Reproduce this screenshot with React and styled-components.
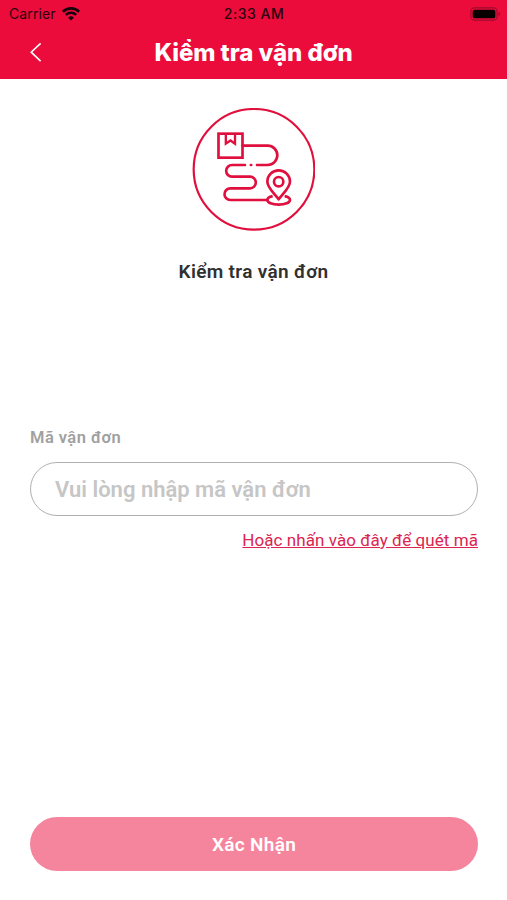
import React, { useState } from "react";
import styled, { createGlobalStyle } from "styled-components";

const App = () => {
  const [code, setCode] = useState("");

  return (
    <>
      <GlobalStyle />
      <Screen>
        <TopArea>
          <StatusBar>
            <Carrier>
              Carrier
              <WifiIcon />
            </Carrier>
            <Clock>2:33 AM</Clock>
            <BatteryIcon />
          </StatusBar>
          <Header>
            <BackButton aria-label="Quay lại">
              <svg width="14" height="22" viewBox="0 0 14 22" fill="none">
                <path d="M11.6 2.3 L2.2 11.2 L11.6 20.1" stroke="#fff" strokeWidth="1.6" />
              </svg>
            </BackButton>
            <Title>Kiểm tra vận đơn</Title>
          </Header>
        </TopArea>
        <Intro>
          <RouteIcon />
          <IntroText>Kiểm tra vận đơn</IntroText>
        </Intro>
        <Form>
          <Label htmlFor="code">Mã vận đơn</Label>
          <Input
            id="code"
            value={code}
            placeholder="Vui lòng nhập mã vận đơn"
            onChange={(e) => setCode(e.target.value)}
          />
          <ScanLink>Hoặc nhấn vào đây để quét mã</ScanLink>
        </Form>
        <Footer>
          <ConfirmButton isActive={code.length > 0}>Xác Nhận</ConfirmButton>
        </Footer>
      </Screen>
    </>
  );
};

export default App;

const WifiIcon = () => (
  <svg width="18" height="14" viewBox="0 0 18 14" fill="none" stroke="#16020a">
    <path d="M0.9 4.7 A11.6 11.6 0 0 1 17.1 4.7" strokeWidth="2.6" />
    <path d="M3.8 7.8 A7.5 7.5 0 0 1 14.2 7.8" strokeWidth="2.4" />
    <path d="M9 13.6 L6.1 10.7 A4.2 4.2 0 0 1 11.9 10.7 Z" fill="#16020a" stroke="none" />
  </svg>
);

const BatteryIcon = () => (
  <svg width="31" height="14" viewBox="0 0 31 14" fill="none">
    <rect x="0.9" y="0.9" width="26.2" height="12.2" rx="3.6" stroke="#9c0a2b" strokeWidth="1.1" />
    <rect x="2.7" y="2.7" width="22.6" height="8.6" rx="1.9" fill="#080001" />
    <path d="M28.5 4.9 Q30.3 5.8 30.3 7 Q30.3 8.2 28.5 9.1 Z" fill="#9c0a2b" />
  </svg>
);

// parcel -> winding route -> map pin
const RouteIcon = () => (
  <svg
    width="123"
    height="123"
    viewBox="24 24 369 369"
    fill="none"
    stroke="#e00f3d"
    strokeWidth="8"
  >
    <circle cx="210" cy="208" r="181" strokeWidth="6.5" />
    <rect x="103.5" y="101" width="72" height="72" />
    <path d="M125.5 101 V131 L139.5 121.5 L153 131 V101" strokeWidth="7" />
    <path d="M176 137 H251 A29 29 0 0 1 251 195 H219" strokeLinecap="round" />
    <path d="M200.5 195 H201.5" strokeLinecap="round" />
    <path
      d="M183 195 H144 A17.5 17.5 0 0 0 144 230 H198 A17.5 17.5 0 0 1 198 265 H139 A17.5 17.5 0 0 0 139 300 H250"
      strokeLinecap="round"
    />
    <path d="M284 298 C273 282 250 263 250 245 A34 34 0 0 1 318 245 C318 263 295 282 284 298 Z" strokeLinejoin="round" />
    <circle cx="284" cy="245" r="14" />
    <path d="M266 288.5 C254 291 250 296 250 300 C250 308 265 314 284 314 C303 314 318 308 318 300 C318 296 314 291 302 288.5" />
  </svg>
);

const GlobalStyle = createGlobalStyle`
  * {
    box-sizing: border-box;
  }

  body {
    margin: 0;
    background-color: #fff;
    font-family: Roboto, "Liberation Sans", sans-serif;
  }
`;

const Screen = styled.div`
  display: flex;
  flex-direction: column;
  height: 900px;
  background-color: #fff;
`;

const TopArea = styled.div`
  height: 79px;
  background-color: #eb0c3c;
`;

const StatusBar = styled.div`
  display: grid;
  grid-template-columns: 1fr auto 1fr;
  align-items: center;
  height: 27px;
  padding: 0 6px 0 9px;
  font-family: Inter, "Liberation Sans", sans-serif;
  font-size: 14px;
  color: #2a030e;

  & > svg {
    justify-self: end;
  }
`;

const Carrier = styled.div`
  display: flex;
  align-items: center;
  gap: 6px;
  letter-spacing: 0.1px;
`;

const Clock = styled.div`
  margin-right: 2px;
  font-weight: 500;
  letter-spacing: 0.5px;
`;

const Header = styled.header`
  display: grid;
  grid-template-columns: 60px 1fr 60px;
  align-items: center;
  height: 50px;
`;

const BackButton = styled.button`
  display: flex;
  padding: 0 0 0 29px;
  border: none;
  background: none;
  cursor: pointer;
`;

const Title = styled.h1`
  margin: 0;
  text-align: center;
  white-space: nowrap;
  font-family: Inter, "Liberation Sans", sans-serif;
  font-size: 24px;
  font-weight: 800;
  letter-spacing: -0.06px;
  color: #fff;
`;

const Intro = styled.section`
  display: flex;
  flex-direction: column;
  align-items: center;
  gap: 29px;
  padding-top: 29px;
`;

const IntroText = styled.p`
  margin: 0;
  font-size: 19px;
  line-height: 24px;
  font-weight: 600;
  letter-spacing: 0.33px;
  color: #303030;
`;

const Form = styled.section`
  display: flex;
  flex-direction: column;
  margin-top: 143px;
  padding: 0 29px 0 30px;
`;

const Label = styled.label`
  font-size: 16.5px;
  line-height: 22px;
  font-weight: 600;
  letter-spacing: 0.45px;
  color: #a0a0a0;
`;

const Input = styled.input`
  height: 54px;
  margin-top: 13px;
  padding: 0 24px;
  border: 1px solid #b0b0b0;
  border-radius: 27px;
  outline: none;
  background-color: #fff;
  font-family: inherit;
  font-size: 22px;
  font-weight: 600;
  color: #303030;

  &::placeholder {
    color: #c6c6c6;
    opacity: 1;
  }
`;

const ScanLink = styled.a`
  align-self: flex-end;
  margin-top: 13px;
  font-size: 17px;
  line-height: 22px;
  letter-spacing: 0.06px;
  color: #dc2450;
  text-decoration: underline;
  cursor: pointer;
`;

const Footer = styled.footer`
  margin-top: auto;
  padding: 0 29px 29px 30px;
`;

const ConfirmButton = styled.button`
  display: block;
  width: 100%;
  height: 54px;
  border: none;
  border-radius: 27px;
  background-color: ${(props) => (props.isActive ? "#eb0c3c" : "#f4859d")};
  font-family: inherit;
  font-size: 19px;
  font-weight: 600;
  letter-spacing: 0.3px;
  color: #fff;
  cursor: pointer;
`;
